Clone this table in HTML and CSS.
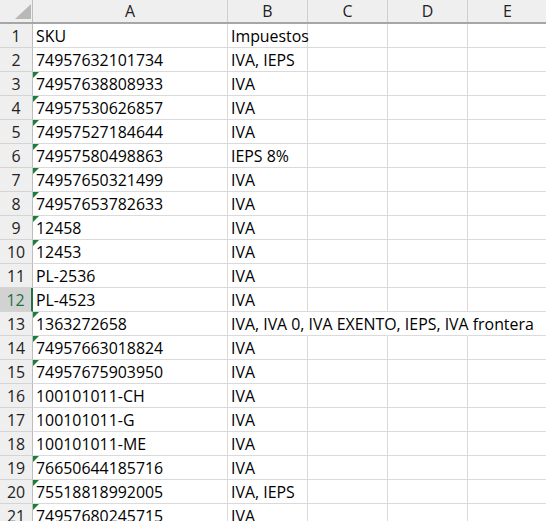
FILE: index.html
```html
<!DOCTYPE html>
<html>
<head>
<meta charset="utf-8">
<link rel="stylesheet" href="styles.css">
</head>
<body>
<div class="sheet">
  <div class="row head">
    <div class="rh corner"><span class="corner-tri"></span></div>
    <div class="ch ca">A</div><div class="ch cb">B</div><div class="ch cc">C</div><div class="ch cd">D</div><div class="ch ce">E</div>
  </div>
  <div class="row"><div class="rh">1</div><div class="c ca">SKU</div><div class="c cb">Impuestos</div><div class="c cc"></div><div class="c cd"></div><div class="c ce"></div></div>
  <div class="row"><div class="rh">2</div><div class="c ca">74957632101734</div><div class="c cb">IVA, IEPS</div><div class="c cc"></div><div class="c cd"></div><div class="c ce"></div></div>
  <div class="row"><div class="rh">3</div><div class="c ca tri">74957638808933</div><div class="c cb">IVA</div><div class="c cc"></div><div class="c cd"></div><div class="c ce"></div></div>
  <div class="row"><div class="rh">4</div><div class="c ca tri">74957530626857</div><div class="c cb">IVA</div><div class="c cc"></div><div class="c cd"></div><div class="c ce"></div></div>
  <div class="row"><div class="rh">5</div><div class="c ca tri">74957527184644</div><div class="c cb">IVA</div><div class="c cc"></div><div class="c cd"></div><div class="c ce"></div></div>
  <div class="row"><div class="rh">6</div><div class="c ca tri">74957580498863</div><div class="c cb">IEPS 8%</div><div class="c cc"></div><div class="c cd"></div><div class="c ce"></div></div>
  <div class="row"><div class="rh">7</div><div class="c ca tri">74957650321499</div><div class="c cb">IVA</div><div class="c cc"></div><div class="c cd"></div><div class="c ce"></div></div>
  <div class="row"><div class="rh">8</div><div class="c ca tri">74957653782633</div><div class="c cb">IVA</div><div class="c cc"></div><div class="c cd"></div><div class="c ce"></div></div>
  <div class="row"><div class="rh">9</div><div class="c ca tri">12458</div><div class="c cb">IVA</div><div class="c cc"></div><div class="c cd"></div><div class="c ce"></div></div>
  <div class="row"><div class="rh">10</div><div class="c ca tri">12453</div><div class="c cb">IVA</div><div class="c cc"></div><div class="c cd"></div><div class="c ce"></div></div>
  <div class="row"><div class="rh">11</div><div class="c ca">PL-2536</div><div class="c cb">IVA</div><div class="c cc"></div><div class="c cd"></div><div class="c ce"></div></div>
  <div class="row"><div class="rh sel">12</div><div class="c ca">PL-4523</div><div class="c cb">IVA</div><div class="c cc"></div><div class="c cd"></div><div class="c ce"></div></div>
  <div class="row"><div class="rh">13</div><div class="c ca tri">1363272658</div><div class="c cb over">IVA, IVA 0, IVA EXENTO, IEPS, IVA frontera</div><div class="c cc nl"></div><div class="c cd nl"></div><div class="c ce"></div></div>
  <div class="row"><div class="rh">14</div><div class="c ca tri">74957663018824</div><div class="c cb">IVA</div><div class="c cc"></div><div class="c cd"></div><div class="c ce"></div></div>
  <div class="row"><div class="rh">15</div><div class="c ca tri">74957675903950</div><div class="c cb">IVA</div><div class="c cc"></div><div class="c cd"></div><div class="c ce"></div></div>
  <div class="row"><div class="rh">16</div><div class="c ca">100101011-CH</div><div class="c cb">IVA</div><div class="c cc"></div><div class="c cd"></div><div class="c ce"></div></div>
  <div class="row"><div class="rh">17</div><div class="c ca">100101011-G</div><div class="c cb">IVA</div><div class="c cc"></div><div class="c cd"></div><div class="c ce"></div></div>
  <div class="row"><div class="rh">18</div><div class="c ca">100101011-ME</div><div class="c cb">IVA</div><div class="c cc"></div><div class="c cd"></div><div class="c ce"></div></div>
  <div class="row"><div class="rh">19</div><div class="c ca tri">76650644185716</div><div class="c cb">IVA</div><div class="c cc"></div><div class="c cd"></div><div class="c ce"></div></div>
  <div class="row"><div class="rh">20</div><div class="c ca tri">75518818992005</div><div class="c cb">IVA, IEPS</div><div class="c cc"></div><div class="c cd"></div><div class="c ce"></div></div>
  <div class="row"><div class="rh">21</div><div class="c ca tri">74957680245715</div><div class="c cb">IVA</div><div class="c cc"></div><div class="c cd"></div><div class="c ce"></div></div>
</div>
</body>
</html>
```
FILE: styles.css
```css
html, body {
  margin: 0;
  padding: 0;
  background: #ffffff;
  overflow: hidden;
}
.sheet {
  width: 546px;
  height: 521px;
  overflow: hidden;
  font-family: "Open Sans", "Liberation Sans", sans-serif;
  font-size: 15.9px;
  color: #000000;
}
.row {
  display: flex;
  height: 24px;
  box-sizing: border-box;
}
.row.head {
  height: 24px;
  background: #efefef;
  border-bottom: 2px solid #a6a6a6;
}
.rh {
  flex: 0 0 33px;
  width: 33px;
  box-sizing: border-box;
  background: #efefef;
  border-right: 1px solid #bdbdbd;
  border-bottom: 1px solid #d4d4d4;
  display: flex;
  align-items: center;
  justify-content: center;
  color: #222222;
  line-height: 1;
  padding-top: 2px;
}
.row.head .rh {
  border-bottom: none;
}
.rh.sel {
  background: #d2d2d2;
  color: #217346;
  border-right: 2px solid #217346;
}
.corner {
  position: relative;
}
.corner-tri {
  position: absolute;
  right: 1px;
  bottom: 3px;
  width: 0;
  height: 0;
  border-left: 16px solid transparent;
  border-bottom: 15px solid #b8b8b8;
}
.ch {
  box-sizing: border-box;
  border-right: 1px solid #cfcfcf;
  display: flex;
  align-items: center;
  justify-content: center;
  color: #222222;
  line-height: 1;
  padding-top: 1px;
}
.c {
  position: relative;
  box-sizing: border-box;
  border-right: 1px solid #dadada;
  border-bottom: 1px solid #dadada;
  padding: 2px 0 0 3px;
  display: flex;
  align-items: center;
  white-space: nowrap;
  line-height: 1;
}
.ca { flex: 0 0 195px; width: 195px; }
.cb { flex: 0 0 80px; width: 80px; }
.cc { flex: 0 0 80px; width: 80px; }
.cd { flex: 0 0 80px; width: 80px; }
.ce { flex: 0 0 80px; width: 80px; }
.c.over {
  overflow: visible;
  border-right-color: transparent;
  z-index: 1;
}
.c.nl {
  border-right-color: transparent;
}
.tri::before {
  content: "";
  position: absolute;
  left: 0;
  top: 0;
  width: 0;
  height: 0;
  border-top: 6px solid #1b7f3c;
  border-right: 6px solid transparent;
}
```
